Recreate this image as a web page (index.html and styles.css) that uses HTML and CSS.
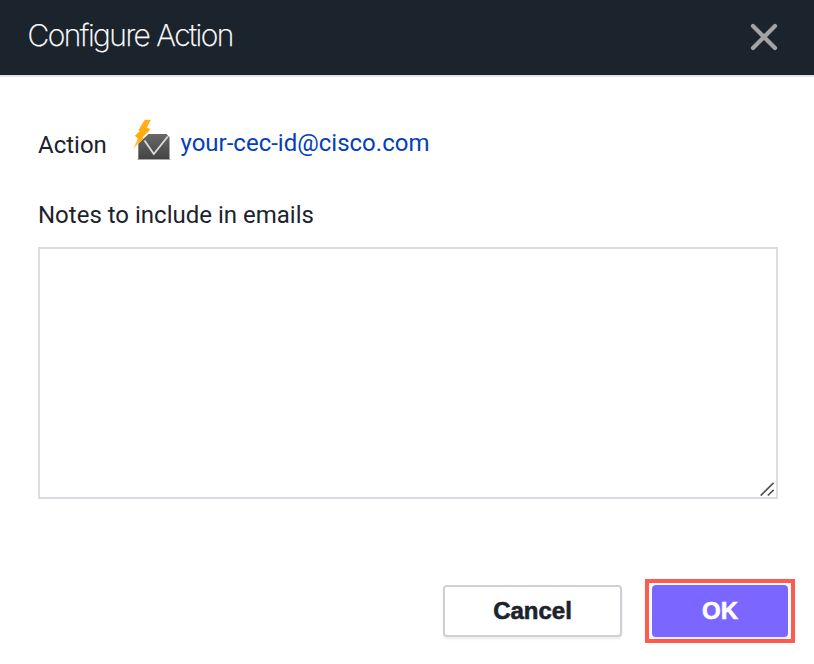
FILE: index.html
```
<!DOCTYPE html>
<html lang="en">
<head>
<meta charset="utf-8">
<title>Configure Action</title>
<link rel="stylesheet" href="styles.css">
</head>
<body>
<div class="dialog">
  <header class="header">
    <h1 class="title">Configure Action</h1>
    <button class="close" aria-label="Close">
      <svg width="28" height="28" viewBox="0 0 28 28"><path d="M3 3 25 25M25 3 3 25" fill="none" stroke="#a3a3a3" stroke-width="4.200" stroke-linecap="round"/></svg>
    </button>
  </header>
  <main class="content">
    <div class="action-row">
      <span class="label">Action</span>
      <svg class="mail-icon" width="40" height="44" viewBox="0 0 40 44">
        <defs>
          <linearGradient id="mail" x1="0" y1="0" x2="0" y2="1"><stop offset="0" stop-color="#686868"/><stop offset="1" stop-color="#434343"/></linearGradient>
          <linearGradient id="bolt" x1="0" y1="0" x2="0" y2="1"><stop offset="0" stop-color="#ffb01c"/><stop offset=".65" stop-color="#ffaa08"/><stop offset="1" stop-color="#ffd98f"/></linearGradient>
        </defs>
        <path d="M6.300 25.500 16.500 16H34.500L37.500 19.500V41.500H6.300Z" fill="url(#mail)"/>
        <path d="M5.500 41.500H38.500" stroke="#aaa" stroke-width="1"/>
        <path d="M12.500 22.500 21.800 36 35.800 18.500" fill="none" stroke="#dadada" stroke-width="1.900"/>
        <path d="M12.500 2 19 1.700 14.800 9.500 18.600 11.200 10.500 19.500 11.500 20.800 1 31 6 20.500 2.800 17.800 7.800 13.200 6.500 12Z" fill="url(#bolt)"/>
      </svg>
      <a class="email">your-cec-id@cisco.com</a>
    </div>
    <label class="label notes-label" for="notes">Notes to include in emails</label>
    <div class="notes-wrap">
      <textarea class="notes" id="notes"></textarea>
      <svg class="grip" width="16" height="16" viewBox="0 0 16 16"><path d="M1.700 14.600 14.500 1.800M8.800 14.500 14.700 8.800" fill="none" stroke="#555" stroke-width="1.700"/></svg>
    </div>
  </main>
  <footer class="footer">
    <button class="button cancel">Cancel</button>
    <div class="highlight"><button class="button ok">OK</button></div>
  </footer>
</div>
</body>
</html>
```

FILE: styles.css
```
* { box-sizing: border-box; }
body { margin: 0; background: #fff; color: #1b232c; font-family: Roboto, sans-serif; }
button { margin: 0; padding: 0; }
.dialog { width: 814px; height: 664px; display: flex; flex-direction: column; overflow: hidden; }
.header {
  height: 77px;
  padding: 0 36px 2px 28px;
  display: flex;
  align-items: center;
  justify-content: space-between;
  background: #1b232c;
  border-bottom: 2px solid #e3e4e7;
}
.title { margin: 0 0 0 -0.5px; padding-bottom: 3px; color: #fff; font: 200 30px/40px Inter, sans-serif; letter-spacing: -1.53px; -webkit-text-stroke: .25px #fff; }
.close { width: 28px; height: 28px; border: 0; background: none; }
.close svg { display: block; }
.content { padding: 41px 36px 0 38px; }
.action-row { display: flex; height: 44px; }
.label { font-size: 24px; line-height: 28px; }
.action-row .label { width: 94px; padding-top: 13px; }
.mail-icon { flex: none; }
.email { color: #0441b4; font-size: 24px; line-height: 28px; margin-left: 8.5px; padding-top: 11px; }
.notes-label { display: block; margin-top: 39px; }
.notes-wrap { position: relative; width: 740px; height: 252px; margin-top: 18px; }
.notes {
  display: block;
  width: 100%;
  height: 100%;
  border: 2px solid #d9dde1;
  background: #fff;
  resize: none;
  outline: 0;
  font: 24px/28px Roboto, sans-serif;
}
.grip { position: absolute; right: 3px; bottom: 2px; }
.footer { margin-top: 80px; padding-right: 19px; display: flex; justify-content: flex-end; align-items: center; gap: 23px; }
.button { font: bold 24px/28px "Liberation Sans", sans-serif; -webkit-text-stroke: .6px currentColor; border-radius: 4px; }
.cancel {
  width: 179px;
  height: 52px;
  border: 2px solid #cdd1d6;
  background: #fff;
  color: #1b232c;
  box-shadow: 0 2px 3px rgba(0, 0, 0, .08);
}
.highlight { width: 150px; height: 64px; padding: 2px 3px; border: 4px solid #ff5a4d; }
.ok { display: block; width: 136px; height: 52px; border: 0; background: #7b66ff; color: #fff; box-shadow: 0 2px 2px rgba(0, 0, 0, .08); }
```
